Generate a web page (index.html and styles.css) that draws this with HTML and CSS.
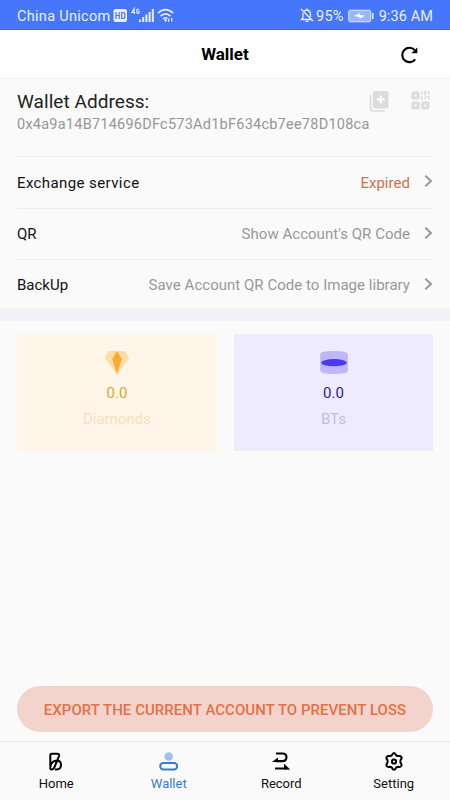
FILE: index.html
```html
<!DOCTYPE html>
<html lang="en">
<head>
<meta charset="utf-8">
<title>Wallet</title>
<link rel="stylesheet" href="styles.css">
</head>
<body>
<div class="app">
  <div class="status">
    <span class="carrier">China Unicom</span>
    <svg class="signals" width="64" height="20" viewBox="0 0 64 20">
      <rect x="1.500" y="4" width="13.500" height="13" rx="2" fill="#e9efff"/>
      <path d="M4 7v7M7.200 7v7M4 10.500h3.200M9.700 7.500v6h1.200q2 0 2-2v-2q0-2-2-2z" fill="none" stroke="#4676fb" stroke-width="1.200"/>
      <path d="M22.200 9V3.500L19.800 7.500h3.300M27 4.500q-2.300-1.400-2.300 1.700 0 3.100 2.300 1.800V6.300h-1" fill="none" stroke="#e9efff" stroke-width="1.100"/>
      <path d="M28 17v-2.500M31.200 17v-5M34.400 17V9.500M37.600 17V7M40.800 17V4" fill="none" stroke="#e9efff" stroke-width="2"/>
      <path d="M46 8.200q7.500-7 15 0M48.500 11.200q5-4.600 10 0M51 14q2.500-2.200 4.500-.5" fill="none" stroke="#e9efff" stroke-width="1.600"/>
      <path d="M52 15l2-1.200 1 1.700-1.500 1.500zM56.300 13l1.700 2h-.9v2h-1.300zM59.300 17l1.700-2h-.8v-2H59z" fill="#e9efff"/>
    </svg>
    <span class="grow"></span>
    <svg class="bell" width="14" height="16" viewBox="0 0 14 16" fill="none" stroke="#e9efff" stroke-width="1.300">
      <path d="M4 4.500Q5 3 6.800 3q3.700.5 3.700 4.500V10M2.900 6v5L1.500 12.500h10M1 2l12 12M5.500 14.300h3M6.800 3V1.500"/>
    </svg>
    <span class="percent">95%</span>
    <svg class="battery" width="26" height="14" viewBox="0 0 26 14">
      <rect x=".7" y="1.200" width="22" height="11.600" rx="1.500" fill="#9bb6ff" stroke="#dce6ff"/>
      <path d="M6 7l6-2.800v1.700l5 .8-5.500 3V8z" fill="#fff"/>
      <path d="M24.700 4v6" stroke="#e9efff" stroke-width="1.500"/>
    </svg>
    <span class="time">9:36 AM</span>
  </div>
  <header class="header">
    <h1>Wallet</h1>
    <svg class="refresh" width="20" height="20" viewBox="0 0 20 20">
      <path d="M15.800 5.100A7.200 7.200 0 1 0 16.200 14.300" fill="none" stroke="#000" stroke-width="2.100"/>
      <path d="M18.300 2.400v5.800h-6z"/>
    </svg>
  </header>
  <section class="address">
    <div class="address-top">
      <h2>Wallet Address:</h2>
      <svg class="copy" width="20" height="22" viewBox="0 0 20 22">
        <path d="M1.500 4v13q0 3 3 3H16" fill="none" stroke="#dcdcdc" stroke-width="1.700"/>
        <rect x="3.800" y="0" width="15.700" height="17.500" rx="2" fill="#dcdcdc"/>
        <path d="M11.700 4.500v8M7.700 8.500h8" stroke="#fff" stroke-width="2"/>
      </svg>
      <svg class="qr" width="19" height="19" viewBox="0 0 19 19">
        <g fill="none" stroke="#dcdcdc" stroke-width="3.200"><rect x="2" y="2" width="5.200" height="5" rx=".5"/><rect x="2" y="12" width="5.200" height="5" rx=".5"/><rect x="11.800" y="12" width="5.200" height="5" rx=".5"/></g>
        <path d="M11 0v3.500M11 5v3.500M14 1v3.500M14 6v2.500M17.700 0v3M17.700 4.500v4M13 1h3M14 5.500h2" fill="none" stroke="#dcdcdc" stroke-width="1.600"/>
      </svg>
    </div>
    <p class="hash">0x4a9a14B714696DFc573Ad1bF634cb7ee78D108ca</p>
  </section>
  <section class="list">
    <div class="row"><span class="label exchange">Exchange service</span><span class="value expired">Expired</span><svg class="chevron" width="9" height="14" viewBox="0 0 9 14"><path d="M1.300 1.700L7 7l-5.700 5.300"/></svg></div>
    <div class="row"><span class="label">QR</span><span class="value show">Show Account's QR Code</span><svg class="chevron" width="9" height="14" viewBox="0 0 9 14"><path d="M1.300 1.700L7 7l-5.700 5.300"/></svg></div>
    <div class="row"><span class="label">BackUp</span><span class="value save">Save Account QR Code to Image library</span><svg class="chevron" width="9" height="14" viewBox="0 0 9 14"><path d="M1.300 1.700L7 7l-5.700 5.300"/></svg></div>
  </section>
  <div class="band"></div>
  <section class="cards">
    <div class="card diamonds">
      <svg width="28" height="24" viewBox="0 0 28 24">
        <path d="M6 0h16l4.200 7L14 23.500 1.800 7z" fill="#ffdca8"/>
        <path d="M14 0l4.800 8L14 23.500 9.200 8z" fill="#ffaa32"/>
      </svg>
      <strong>0.0</strong><span>Diamonds</span>
    </div>
    <div class="card bts">
      <svg width="28" height="24" viewBox="0 0 28 24">
        <path d="M.2 3Q.2 0 14 0t13.800 3v17q-1 3-13.800 3T.2 20z" fill="#beb6f8"/>
        <ellipse cx="14" cy="11.700" rx="12.700" ry="3.600" fill="#4c3aed"/>
      </svg>
      <strong>0.0</strong><span>BTs</span>
    </div>
  </section>
  <button class="export">EXPORT THE CURRENT ACCOUNT TO PREVENT LOSS</button>
  <nav class="nav">
    <a class="tab">
      <svg width="20" height="20" viewBox="0 0 20 20" fill="none" stroke="#000" stroke-width="2" stroke-linejoin="round">
        <path d="M4.300 14.500V3.200q0-1.500 1.500-1.500h5.400q2.500 0 1.800 2.400L8.300 15.500q-.9 2-2.500 2-1.500 0-1.500-1.500 0-6.800 6.500-7.500 4.200 0 4.200 4.300 0 4.700-4.500 4.700H9"/>
      </svg><span>Home</span>
    </a>
    <a class="tab active">
      <svg width="20" height="20" viewBox="0 0 20 20">
        <circle cx="9.700" cy="4.500" r="4.300" fill="#a0bff5"/>
        <rect x="1.200" y="11" width="17" height="6.500" rx="3.200" fill="none" stroke="#397bd0" stroke-width="2"/>
      </svg><span>Wallet</span>
    </a>
    <a class="tab">
      <svg width="20" height="20" viewBox="0 0 20 20">
        <path d="M5 1.500h6.500q4 0 4 3.800t-4 3.800H5M4 16.500H16" fill="none" stroke="#000" stroke-width="2.100"/>
        <path d="M1 10.100l6-4.600v4.600zM13 11.800l6.300 5.700H13z"/>
      </svg><span>Record</span>
    </a>
    <a class="tab">
      <svg width="20" height="20" viewBox="0 0 20 20" fill="none" stroke="#000" stroke-width="2" stroke-linejoin="round">
        <path d="M10 1.100Q11 1.100 12.100 3.200Q12.700 4 14 4.100Q16.500 3.600 17.100 4.800Q18.300 6 16.600 7.900Q16.200 9.400 16.600 10.900Q18.300 12.900 17.100 14.100Q16.500 15.300 14 14.800Q12.700 14.900 12.100 15.700Q11 17.800 10 17.800Q9 17.800 7.900 15.700Q7.300 14.900 6 14.800Q3.500 15.300 2.900 14.100Q1.700 12.900 3.400 10.900Q3.800 9.400 3.400 7.900Q1.700 6 2.900 4.800Q3.500 3.600 6 4.100Q7.300 4 7.900 3.200Q9 1.100 10 1.100z"/>
        <circle cx="10" cy="9.500" r="2.100"/>
      </svg><span>Setting</span>
    </a>
  </nav>
</div>
</body>
</html>
```
FILE: styles.css
```css
* { box-sizing: border-box; }
body { margin: 0; font-family: Roboto, sans-serif; background: #fafafa; color: #111; }
h1, h2, p { margin: 0; }
svg { display: block; flex: none; }
.app { width: 450px; height: 800px; display: flex; flex-direction: column; overflow: hidden; white-space: nowrap; }
.status { height: 30px; flex: none; display: flex; align-items: center; padding: 3px 17px 0; background: #4676fb; border-bottom: 1px solid #3466df; color: #e9efff; font-size: 14.500px; }
.carrier { letter-spacing: .3px; }
.grow { flex: 1; }
.signals { margin-left: 1px; margin-top: -2px; }
.bell { margin-right: 2px; margin-top: -2px; }
.percent { letter-spacing: .2px; }
.time { letter-spacing: .1px; }
.battery { margin: -1px 5px 0 4px; }
.header { height: 49px; flex: none; display: grid; grid-template-columns: 1fr auto 1fr; align-items: center; padding: 0 31px 0 17px; background: #fff; border-bottom: 1px solid #eee; }
h1 { grid-column: 2; font-size: 17px; font-weight: 700; margin-left: 14px; color: #000; }
.refresh { justify-self: end; margin-top: 1px; }
.address { height: 77px; flex: none; padding: 10px 17px 0; }
.address-top { display: flex; height: 25px; align-items: center; }
h2 { flex: 1; font-size: 19px; font-weight: 400; line-height: 25px; color: #222; letter-spacing: .05px; }
.copy { margin-right: 22px; }
.qr { margin-right: 3px; margin-top: -2px; }
.hash { font-size: 14.500px; line-height: 22px; color: #979797; letter-spacing: .24px; }
.list { padding: 0 17px; height: 152px; flex: none; display: grid; grid-template-rows: 52px 51px 49px; }
.row { border-top: 1px solid #eee; display: flex; align-items: center; font-size: 15px; }
.row:last-child { padding-top: 2px; }
.label { color: #111; flex: 1; }
.exchange { letter-spacing: .4px; }
.value { color: #999; margin-right: 14px; letter-spacing: .03px; }
.expired { color: #cf6f4b; }
.chevron { margin-top: -3px; fill: none; stroke: #999; stroke-width: 2; }
.band { height: 13px; flex: none; background: #f0f2f7; }
.cards { display: grid; grid-template-columns: 200px 199px; gap: 17px; padding: 13px 17px 0; }
.card { height: 117px; display: flex; flex-direction: column; align-items: center; padding-top: 17px; }
.card strong { font-size: 15px; font-weight: 400; line-height: 20px; margin-top: 8px; }
.card span { font-size: 15px; line-height: 20px; margin-top: 6px; letter-spacing: .05px; }
.diamonds { background: #fff5e9; color: #f5e2bd; }
.diamonds strong { color: #dfa72f; }
.bts { background: #eeebfe; color: #c4bbe8; }
.bts strong { color: #321b9c; }
.export { height: 46px; flex: none; margin: auto 17px 9px; padding: 2px 0 0; border: 0; border-radius: 23px; background: #f2d4cc; color: #e77047; font: 500 15px Roboto, sans-serif; letter-spacing: .04px; white-space: nowrap; }
.nav { height: 59px; flex: none; border-top: 1px solid #e8e8e8; display: grid; grid-template-columns: repeat(4, 1fr); }
.tab { display: flex; flex-direction: column; align-items: center; padding-top: 10px; color: #111; }
.tab span { font-size: 13px; line-height: 18px; margin-top: 3px; }
.active { color: #397bd0; }
```
